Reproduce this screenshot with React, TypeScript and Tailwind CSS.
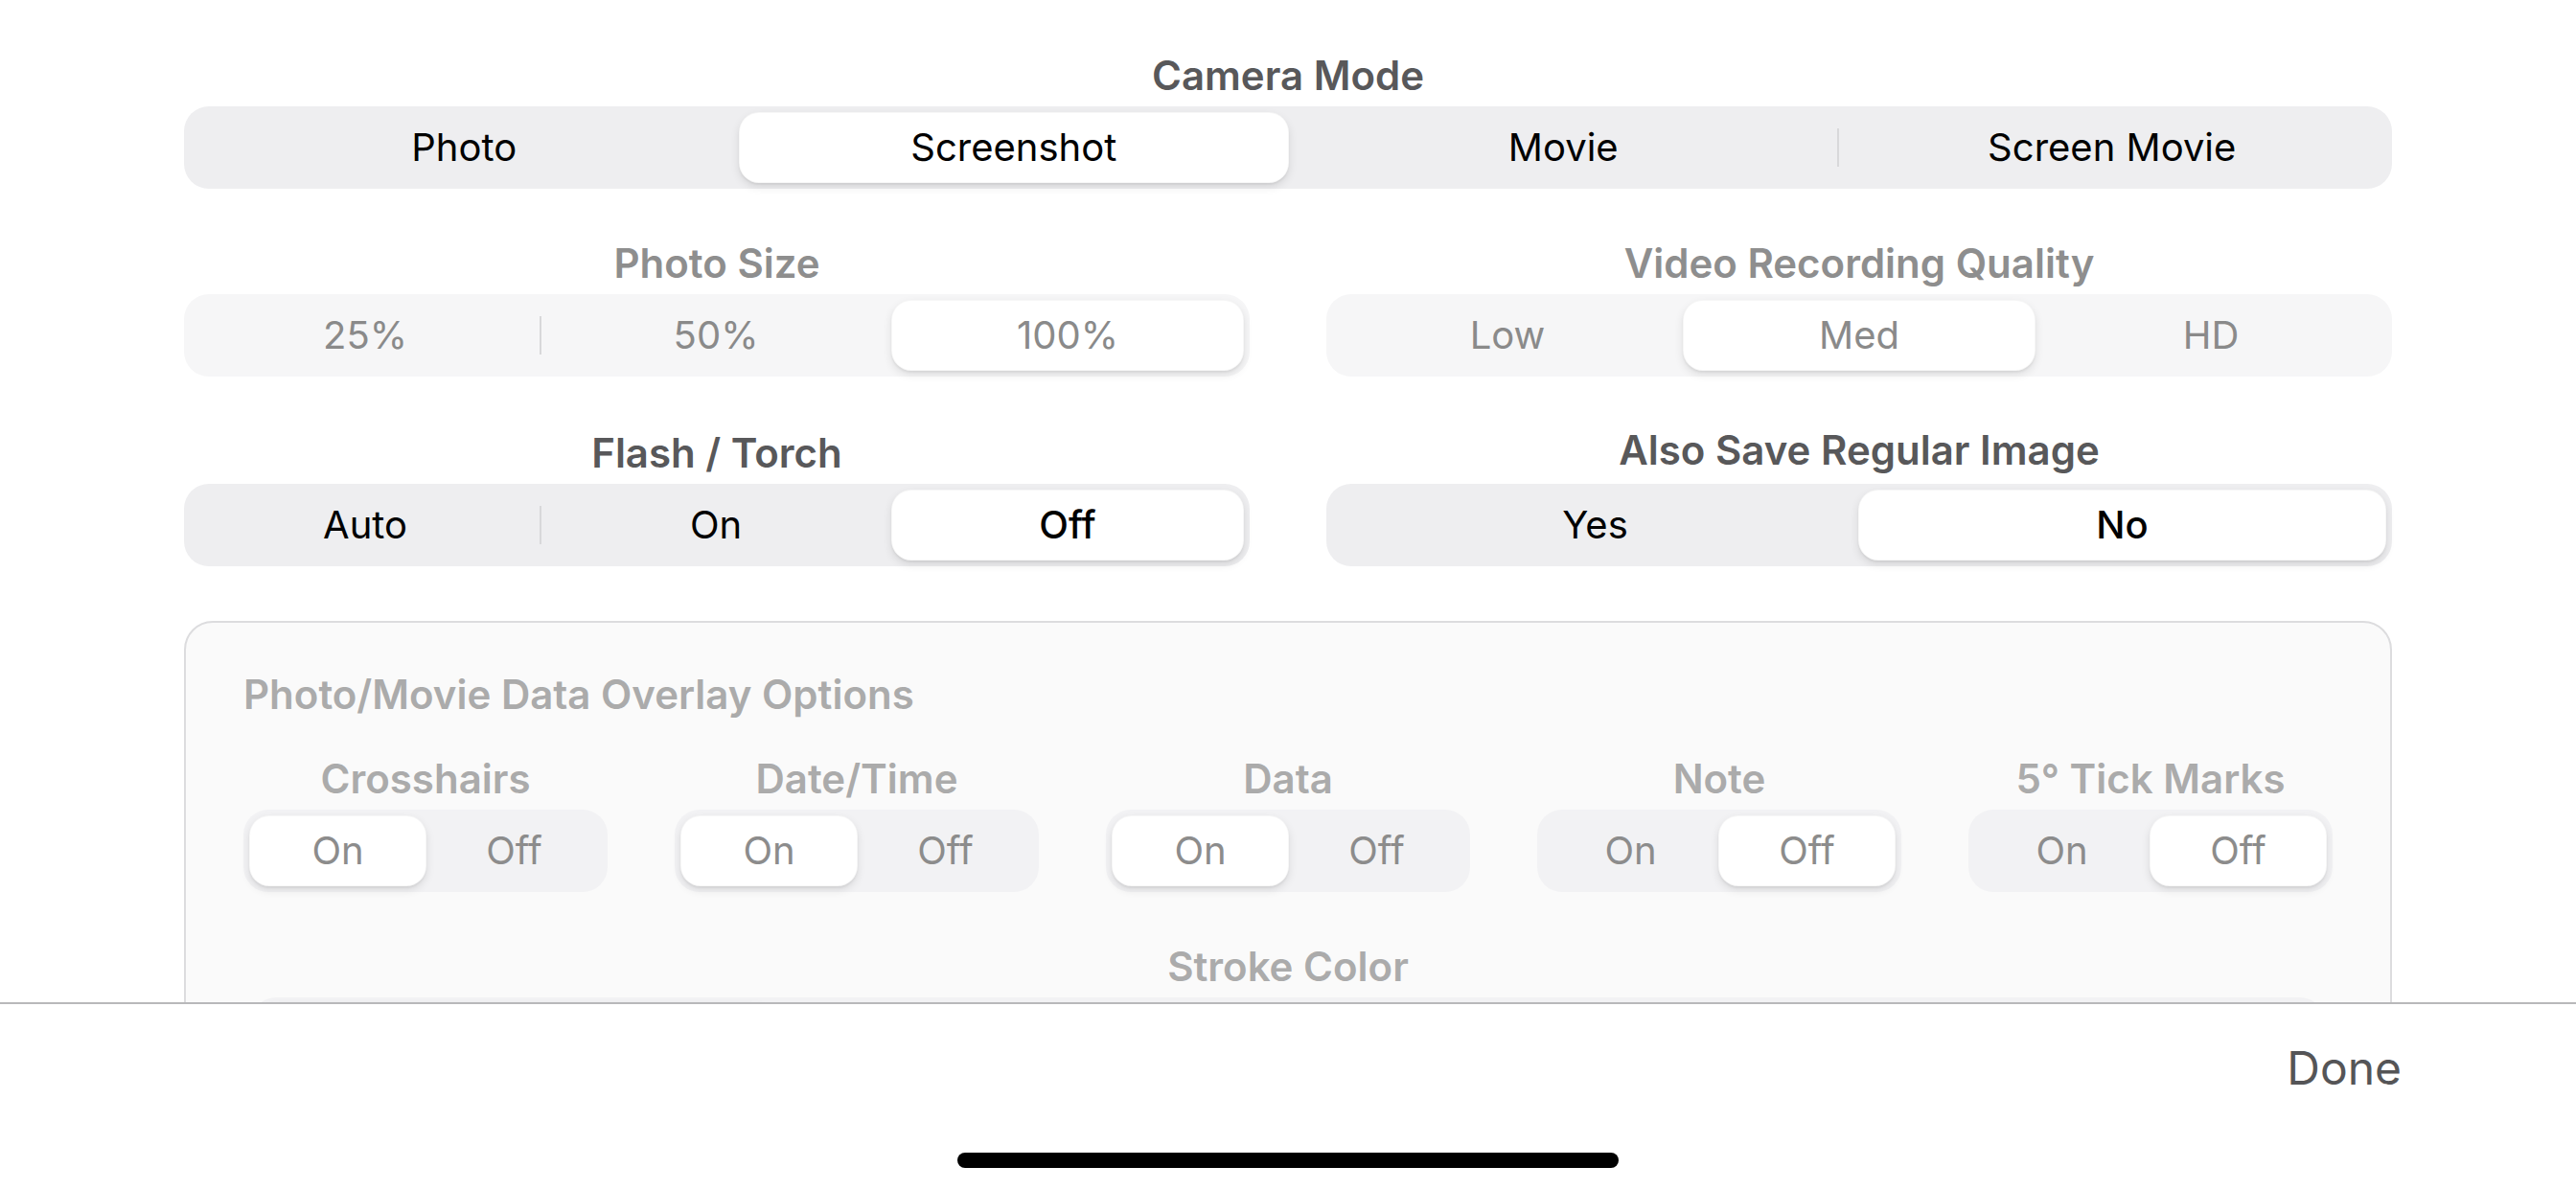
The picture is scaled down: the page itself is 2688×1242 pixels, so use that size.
import React from "react";

type SegProps = {
  items: string[];
  selected: number;
  tone: "active" | "disabled" | "faded";
  bold?: boolean;
};

const tones = {
  active: { bg: "bg-[#eeeef0]", text: "text-black" },
  disabled: { bg: "bg-[#f6f6f7]", text: "text-[#8a8a8a]" },
  faded: { bg: "bg-[#f2f2f4]", text: "text-[#8c8c8c]" },
};

const Segmented = ({ items, selected, tone, bold }: SegProps) => {
  const t = tones[tone];
  return (
    <div className={`flex h-[86px] p-[6px] rounded-[26px] ${t.bg}`}>
      {items.map((label, i) => {
        const isSel = i === selected;
        // separator only shows between two unselected segments
        const showSep = i > 0 && i !== selected && i - 1 !== selected;
        return (
          <React.Fragment key={label + i}>
            {i > 0 && (
              <div
                className={`w-[2px] h-[40px] self-center -mx-[1px] ${showSep ? "bg-[#d8d8da]" : "bg-transparent"}`}
              />
            )}
            <div
              className={`flex-1 flex items-center justify-center rounded-[21px] text-[40px] ${t.text} ${
                isSel
                  ? "bg-white shadow-[0_4px_10px_rgba(0,0,0,0.10),0_2px_2px_rgba(0,0,0,0.05)] border border-black/[0.03]"
                  : ""
              } ${bold && isSel ? "font-medium" : "font-normal"}`}
            >
              {label}
            </div>
          </React.Fragment>
        );
      })}
    </div>
  );
};

const Label = ({ children, color }: { children: React.ReactNode; color: string }) => (
  <div className={`h-[54px] mb-[6px] flex items-center justify-center text-[42px] font-semibold ${color}`}>
    {children}
  </div>
);

const overlayCols = [
  { label: "Crosshairs", sel: 0 },
  { label: "Date/Time", sel: 0 },
  { label: "Data", sel: 0 },
  { label: "Note", sel: 1 },
  { label: "5° Tick Marks", sel: 1 },
];

export default function App() {
  return (
    <div className="w-[2688px] h-[1242px] flex flex-col bg-white font-['Inter','Liberation_Sans',sans-serif] overflow-hidden">
      {/* Scrolling settings area */}
      <div className="flex-1 overflow-hidden px-[192px] pt-[51px]">
        <Label color="text-[#58585a]">Camera Mode</Label>
        <Segmented items={["Photo", "Screenshot", "Movie", "Screen Movie"]} selected={1} tone="active" />

        <div className="grid grid-cols-2 gap-x-[80px] mt-[50px]">
          <div>
            <Label color="text-[#8e8e8e]">Photo Size</Label>
            <Segmented items={["25%", "50%", "100%"]} selected={2} tone="disabled" />
          </div>
          <div>
            <Label color="text-[#8e8e8e]">Video Recording Quality</Label>
            <Segmented items={["Low", "Med", "HD"]} selected={1} tone="disabled" />
          </div>
        </div>

        <div className="grid grid-cols-2 gap-x-[80px] mt-[52px]">
          <div>
            <Label color="text-[#58585a]">Flash / Torch</Label>
            <Segmented items={["Auto", "On", "Off"]} selected={2} tone="active" bold />
          </div>
          <div>
            <div className="h-[54px] -mt-[3px] mb-[9px] flex items-center justify-center text-[42px] font-semibold text-[#58585a]">
              Also Save Regular Image
            </div>
            <Segmented items={["Yes", "No"]} selected={1} tone="active" bold />
          </div>
        </div>

        {/* Overlay options card */}
        <div className="mt-[57px] rounded-[30px] border-2 border-[#dcdcde] bg-[#fafafa] px-[60px] pt-[47px] pb-[40px]">
          <div className="h-[54px] flex items-center text-[42px] font-semibold text-[#ababab]">
            Photo/Movie Data Overlay Options
          </div>
          <div className="grid grid-cols-5 gap-x-[70px] mt-[34px]">
            {overlayCols.map((c) => (
              <div key={c.label}>
                <Label color="text-[#ababab]">{c.label}</Label>
                <Segmented items={["On", "Off"]} selected={c.sel} tone="faded" />
              </div>
            ))}
          </div>
          <div className="mt-[50px] px-[8px]">
            <Label color="text-[#ababab]">Stroke Color</Label>
            <Segmented items={["", "", "", ""]} selected={0} tone="faded" />
          </div>
        </div>
      </div>

      {/* Bottom toolbar */}
      <div className="h-[196px] shrink-0 border-t-2 border-[#b8b8ba] bg-white flex flex-col">
        <div className="h-[134px] flex items-center justify-end pr-[182px]">
          <span className="text-[48px] text-[#555557]">Done</span>
        </div>
        <div className="flex justify-center mt-[21px]">
          <div className="w-[690px] h-[16px] rounded-full bg-black" />
        </div>
      </div>
    </div>
  );
}
